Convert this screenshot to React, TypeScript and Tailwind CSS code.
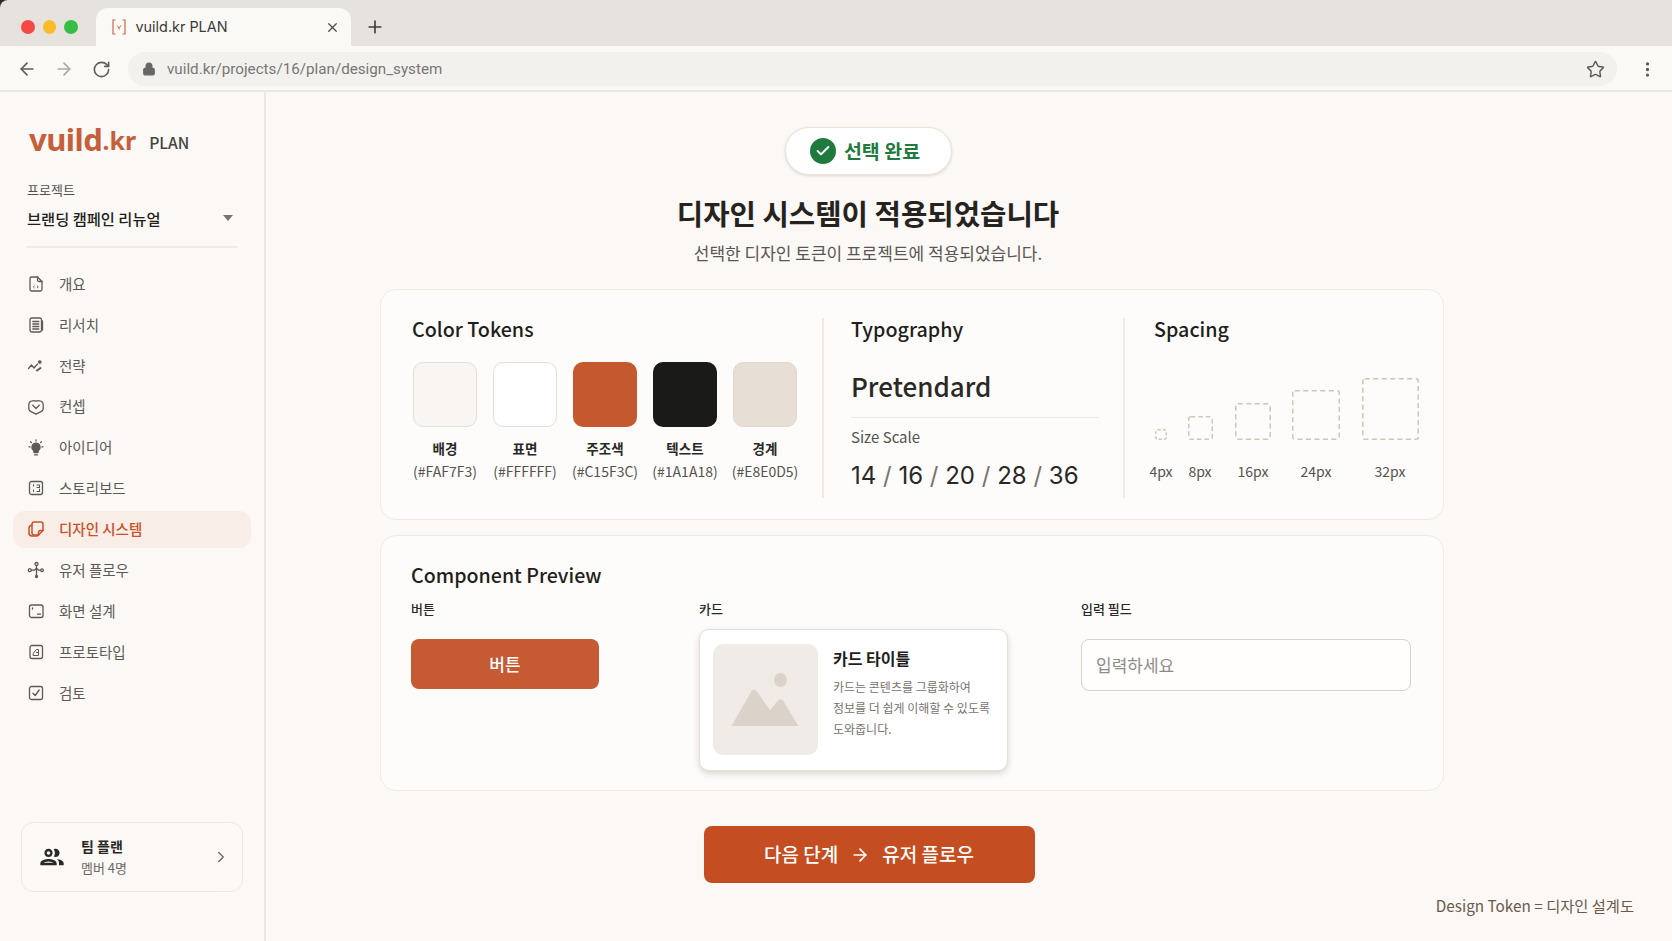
import React from "react";
import { ArrowLeft, ArrowRight, RotateCw, Lock, Star, X, Plus, EllipsisVertical, ChevronRight, Check } from "lucide-react";
import { MdOutlineGroup } from "react-icons/md";

type IconProps = { className?: string };
const Svg = ({ className, children }: IconProps & { children: React.ReactNode }) => (
  <svg viewBox="0 0 18 18" fill="none" stroke="currentColor" strokeWidth="1.3" strokeLinecap="round" strokeLinejoin="round" className={className ?? "h-[18px] w-[18px] shrink-0"}>
    {children}
  </svg>
);

const icons: Record<string, React.ReactNode> = {
  overview: (
    <Svg>
      <path d="M4.500 2h6l4.500 4.500v8A1.500 1.500 0 0 1 13.500 16h-9A1.500 1.500 0 0 1 3 14.500v-11A1.500 1.500 0 0 1 4.500 2z" />
      <path d="M10.500 2v3a1.500 1.500 0 0 0 1.500 1.500h3" />
      <path d="M7.300 11l-1 .9 1 .9M10.300 11l1 .9-1 .9" strokeWidth="0.9" />
    </Svg>
  ),
  research: (
    <Svg>
      <rect x="3" y="2" width="11.500" height="14" rx="1.800" />
      <path d="M5.800 5.500h6M5.800 8h6M5.800 10.500h6M5.800 13h6M15.500 5v9" />
    </Svg>
  ),
  strategy: (
    <Svg>
      <path d="M1.500 11.500l3-3.500 2.500 3 3.500-4" />
      <circle cx="12.800" cy="5" r="1.200" fill="currentColor" />
      <path d="M10 13.500l3.500-2.500" strokeWidth="2" />
    </Svg>
  ),
  concept: (
    <Svg>
      <path d="M9 16.200l-5-2.500a3.500 3.500 0 0 1-2.200-3.200V6.500A4 4 0 0 1 5.500 2.800C7 2.300 8 2.600 9 3.300c1-.7 2-1 3.500-.5a4 4 0 0 1 3.700 3.700v4a3.500 3.500 0 0 1-2.200 3.200z" />
      <path d="M5.800 7.300L9 10.500l3.200-3.200" />
    </Svg>
  ),
  idea: (
    <Svg>
      <path d="M9 4.200a4 4 0 0 0-2.400 7.200l.5 2.100h3.800l.5-2.100A4 4 0 0 0 9 4.200z" fill="currentColor" />
      <path d="M7.500 15.800h3M9 .9v1.100M2 7.800h1.200M14.800 7.800H16M3.600 2.800l.8.800M14.400 2.800l-.8.800" />
    </Svg>
  ),
  storyboard: (
    <Svg>
      <rect x="2.500" y="2.500" width="13" height="13" rx="2" />
      <path d="M6.500 5.500v1.500M6.500 11v1.500M10 6h2.500v2.500H10M10 12.500h2.500V10" strokeWidth="1.100" />
    </Svg>
  ),
  design: (
    <Svg>
      <path d="M5 3.800A2 2 0 0 1 7 2h7a2 2 0 0 1 2 2v6.500L11.500 15H7a2 2 0 0 1-2-2z" strokeWidth="1.500" />
      <path d="M5 5.300A3 3 0 0 0 2 8.300v4.700A3 3 0 0 0 5 16h4.500a3 3 0 0 0 2-1" strokeWidth="1.500" />
      <path d="M16 10.500h-2.500a2 2 0 0 0-2 2V15" strokeWidth="1.500" />
    </Svg>
  ),
  flow: (
    <Svg>
      <circle cx="9.500" cy="3" r="1.500" />
      <circle cx="2.800" cy="9.200" r="1.500" />
      <circle cx="15" cy="9.200" r="1.300" />
      <circle cx="9.500" cy="15.500" r="1" fill="currentColor" />
      <path d="M9.500 4.500v10M4.300 9.200h3l2.200-2 2.200 2h1.500" />
    </Svg>
  ),
  screen: (
    <Svg>
      <rect x="2.500" y="3" width="13.500" height="12.500" rx="2" />
      <path d="M5.500 6v1M10.500 12.200h3" />
    </Svg>
  ),
  prototype: (
    <Svg>
      <rect x="3" y="2.500" width="12.500" height="13" rx="2" />
      <path d="M6.500 12.500h5V6.500H9.500L6.500 10zM9.500 9.500h2" strokeWidth="1" />
    </Svg>
  ),
  review: (
    <Svg>
      <rect x="2.500" y="2.500" width="13" height="13" rx="2" />
      <path d="M6 9.200l2.200 2.300L12.200 6" />
    </Svg>
  ),
};

const nav = [
  ["개요", "overview"],
  ["리서치", "research"],
  ["전략", "strategy"],
  ["컨셉", "concept"],
  ["아이디어", "idea"],
  ["스토리보드", "storyboard"],
  ["디자인 시스템", "design"],
  ["유저 플로우", "flow"],
  ["화면 설계", "screen"],
  ["프로토타입", "prototype"],
  ["검토", "review"],
];

const swatches = [
  { name: "배경", hex: "#FAF7F3", cls: "bg-[#f8f5f2] border border-[#e4ded7]" },
  { name: "표면", hex: "#FFFFFF", cls: "bg-white border border-[#e4ded7]" },
  { name: "주조색", hex: "#C15F3C", cls: "bg-[#c4582f]" },
  { name: "텍스트", hex: "#1A1A18", cls: "bg-[#1a1a18]" },
  { name: "경계", hex: "#E8E0D5", cls: "bg-[#e7dfd6] border border-[#e0d8ce]" },
];

const spacings = [
  { label: "4px", w: 12, h: 11, dash: "3 2", col: "w-[26px]" },
  { label: "8px", w: 25, h: 24, dash: "4.500 3", col: "w-[52px]" },
  { label: "16px", w: 36, h: 37, dash: "5 3.500", col: "w-[54px]" },
  { label: "24px", w: 48, h: 50, dash: "5 3.500", col: "w-[72px]" },
  { label: "32px", w: 57, h: 62, dash: "5 3.500", col: "w-[76px]" },
];

function Chrome() {
  return (
    <header className="shrink-0">
      <div className="flex h-[46px] items-end rounded-tl-[8px] bg-[#e6e3df] pl-[21px]">
        <div className="flex h-full items-center gap-[8px] pt-[8px]">
          <span className="h-[13.500px] w-[13.500px] rounded-full bg-[#f44a45]" />
          <span className="h-[13.500px] w-[13.500px] rounded-full bg-[#fbbc2c]" />
          <span className="h-[13.500px] w-[13.500px] rounded-full bg-[#37bf45]" />
        </div>
        <div className="ml-[18px] flex h-[38px] w-[255px] items-center rounded-t-[12px] bg-[#fbf9f6] pl-[16px] pr-[11px]">
          <svg viewBox="0 0 14 16" fill="none" stroke="#c8684a" strokeWidth="1.200" className="h-[16px] w-[14px] shrink-0">
            <path d="M3.500 1H1v14h2.500M10.500 1H13v14h-2.500" />
            <path d="M5 6.500L7 9l2-2.500M7 9v1.500" strokeWidth="1" />
          </svg>
          <span className="ml-[10px] flex-1 font-['Inter',sans-serif] text-[14.400px] leading-none text-[#3a3a38]">vuild.kr PLAN</span>
          <X className="h-[15px] w-[15px] text-[#4a4a48]" strokeWidth={2} />
        </div>
        <div className="ml-[14px] flex h-[38px] items-center">
          <Plus className="h-[20px] w-[20px] text-[#3f3f3d]" strokeWidth={2} />
        </div>
      </div>
      <div className="flex h-[46px] items-center border-b-2 border-[#ece8e3] bg-[#fbf9f6] pl-[17px] pt-[2px]">
        <ArrowLeft className="h-[20px] w-[20px] text-[#5c5c5a]" strokeWidth={2} />
        <ArrowRight className="ml-[17px] h-[20px] w-[20px] text-[#a9a9a6]" strokeWidth={2} />
        <RotateCw className="ml-[18px] h-[19px] w-[19px] text-[#5c5c5a]" strokeWidth={2} />
        <div className="ml-[17px] flex h-[34px] w-[1489px] items-center rounded-full bg-[#f3f1ee] pl-[14px] pr-[12px]">
          <Lock className="h-[14px] w-[14px] fill-[#666664] text-[#666664]" strokeWidth={2} />
          <span className="ml-[11px] flex-1 pt-[2px] font-['Roboto',sans-serif] text-[15.200px] leading-none text-[#777775]">vuild.kr/projects/16/plan/design_system</span>
          <Star className="h-[19px] w-[19px] text-[#5c5c5a]" strokeWidth={1.800} />
        </div>
        <EllipsisVertical className="ml-[21px] h-[19px] w-[19px] text-[#5c5c5a]" strokeWidth={2.200} />
      </div>
    </header>
  );
}

function Sidebar() {
  return (
    <aside className="flex w-[266px] shrink-0 flex-col border-r-2 border-[#ebe7e2] bg-[#fbf8f5]">
      <div className="flex h-[65px] items-end pl-[29px] pt-[34px]">
        <span className="font-['Noto_Sans',sans-serif] text-[31px] font-bold leading-[36px] tracking-[-0.500px] text-[#c55f3b]">vuild</span>
        <span className="font-['Noto_Sans',sans-serif] text-[25px] font-bold leading-[34px] text-[#c55f3b]">.kr</span>
        <span className="ml-[13px] text-[15.700px] font-medium leading-[29px] text-[#444442]">PLAN</span>
      </div>
      <div className="mt-[23.500px] px-[27px] text-[13px] leading-[18px] text-[#55524e]">프로젝트</div>
      <div className="mt-[7px] flex items-center justify-between pl-[27px] pr-[31px]">
        <span className="text-[15.300px] font-medium leading-[24px] text-[#1f1e1c]">브랜딩 캠페인 리뉴얼</span>
        <span className="h-0 w-0 border-x-[5px] border-t-[6px] border-x-transparent border-t-[#77736e]" />
      </div>
      <div className="mx-[26px] mt-[16px] h-[2px] bg-[#efeae4]" />
      <nav className="mt-[18px] flex flex-col gap-[3.900px] px-[13px]">
        {nav.map(([label, key]) => {
          const active = key === "design";
          return (
            <div
              key={key}
              className={
                active
                  ? "flex h-[37px] items-center gap-[14px] rounded-[12px] bg-[#f8eee7] px-[14px] text-[#c9502a]"
                  : "flex h-[37px] items-center gap-[14px] px-[14px] text-[#5d5a56]"
              }
            >
              {icons[key]}
              <span className={active ? "text-[14.500px] font-medium leading-none" : "text-[14.500px] leading-none"}>{label}</span>
            </div>
          );
        })}
      </nav>
      <div className="mx-[21px] mb-[49px] mt-auto flex h-[70px] items-center rounded-[12px] border border-[#efe8e0] pl-[16px] pr-[12px]">
        <MdOutlineGroup className="h-[28px] w-[28px] shrink-0 text-[#2a2826]" />
        <div className="ml-[15px] flex-1">
          <div className="text-[14px] font-bold leading-[20px] text-[#2a2826]">팀 플랜</div>
          <div className="mt-[2px] text-[13px] leading-[20px] text-[#6c6965]">멤버 4명</div>
        </div>
        <ChevronRight className="h-[18px] w-[18px] text-[#6c6965]" strokeWidth={1.800} />
      </div>
    </aside>
  );
}

function TokensCard() {
  return (
    <section className="flex h-[231px] w-[1064px] rounded-[16px] border border-[#f0eae3] bg-[#fdfcfa] pb-[21px] pt-[28px]">
      <div className="w-[440.500px] pl-[32px]">
        <h2 className="-ml-px text-[19.700px] font-medium leading-[22px] text-[#1f1e1c]">Color Tokens</h2>
        <div className="mt-[22px] flex gap-[16px]">
          {swatches.map((s) => (
            <div key={s.name} className="flex w-[64px] flex-col items-center">
              <div className={`h-[65px] w-[64px] rounded-[10px] ${s.cls}`} />
              <div className="mt-[11px] text-[13.500px] font-bold leading-[20px] text-[#2a2826]">{s.name}</div>
              <div className="mt-[3px] whitespace-nowrap text-[14px] leading-[20px] text-[#55524e]">({s.hex})</div>
            </div>
          ))}
        </div>
      </div>
      <div className="w-[301px] border-l-2 border-[#f0eae3] pl-[27.500px]">
        <h2 className="text-[19.700px] font-medium leading-[22px] text-[#1f1e1c]">Typography</h2>
        <div className="mt-[28px] text-[26px] font-medium leading-[36px] text-[#2a2826]">Pretendard</div>
        <div className="mt-[13px] h-px w-[248px] bg-[#efeae4]" />
        <div className="mt-[9px] text-[15px] leading-[20px] text-[#55524e]">Size Scale</div>
        <div className="mt-[12px] font-['Inter',sans-serif] text-[24px] leading-[34px] text-[#2a2826]">
          14 <span className="text-[#77736e]">/</span> 16 <span className="text-[#77736e]">/</span> 20 <span className="text-[#77736e]">/</span> 28 <span className="text-[#77736e]">/</span> 36
        </div>
      </div>
      <div className="flex-1 border-l-2 border-[#f0eae3] pl-[29.500px]">
        <h2 className="text-[19.700px] font-medium leading-[22px] text-[#1f1e1c]">Spacing</h2>
        <div className="ml-[-6px] flex">
          {spacings.map((s) => (
            <div key={s.label} className={`flex shrink-0 flex-col items-center ${s.col}`}>
              <div className="flex h-[100px] items-end">
                <svg width={s.w} height={s.h} viewBox={`0 0 ${s.w} ${s.h}`} fill="none">
                  <rect x="0.750" y="0.750" width={s.w - 1.500} height={s.h - 1.500} rx="2" stroke="#d3c4b4" strokeWidth="1.500" strokeDasharray={s.dash} />
                </svg>
              </div>
              <div className="mt-[21px] whitespace-nowrap text-[14px] leading-[20px] text-[#55524e]">{s.label}</div>
            </div>
          ))}
        </div>
      </div>
    </section>
  );
}

function PreviewCard() {
  return (
    <section className="mt-[15px] h-[256px] w-[1064px] rounded-[16px] border border-[#f0eae3] bg-[#fdfcfa] pl-[30px] pt-[27px]">
      <h2 className="text-[19.600px] font-medium leading-[24px] text-[#1f1e1c]">Component Preview</h2>
      <div className="mt-[13px] flex">
        <div className="w-[288px]">
          <div className="text-[13px] font-medium leading-[18px] text-[#2a2826]">버튼</div>
          <button className="mt-[21px] h-[50px] w-[188px] rounded-[8px] bg-[#c55a33] text-[17px] font-medium text-white">버튼</button>
        </div>
        <div className="w-[382px]">
          <div className="text-[13px] font-medium leading-[18px] text-[#2a2826]">카드</div>
          <div className="mt-[11px] flex h-[142px] w-[309px] gap-[15px] rounded-[10px] border border-[#e4ded7] bg-white py-[14px] pl-[13px] shadow-[0_3px_6px_rgba(90,70,50,0.2)]">
            <div className="h-[111px] w-[105px] shrink-0 rounded-[10px] bg-[#f0ebe6]">
              <svg viewBox="0 0 105 111" className="h-full w-full" fill="#dbd3ca">
                <ellipse cx="67.500" cy="36" rx="6.500" ry="7" />
                <path d="M18.500 82L38.500 47q2.500-3 5 0L57 66l8-9.500q2.500-2.500 5 0L85.500 82z" />
              </svg>
            </div>
            <div className="pt-[3px]">
              <div className="text-[16px] font-bold leading-[22px] text-[#1f1e1c]">카드 타이틀</div>
              <p className="mt-[7px] text-[12px] leading-[21px] text-[#77736e]">
                카드는 콘텐츠를 그룹화하여
                <br />
                정보를 더 쉽게 이해할 수 있도록
                <br />
                도와줍니다.
              </p>
            </div>
          </div>
        </div>
        <div className="w-[330px]">
          <div className="text-[13px] font-medium leading-[18px] text-[#2a2826]">입력 필드</div>
          <div className="mt-[21px] flex h-[52px] items-center rounded-[8px] border-[1.500px] border-[#d8d2cb] bg-[#fffefd] pb-[1px] pl-[14px] text-[17px] text-[#8f8c88]">입력하세요</div>
        </div>
      </div>
    </section>
  );
}

export default function App() {
  return (
    <div className="flex h-[941px] w-full flex-col overflow-hidden bg-[#2a2a2a] font-['Noto_Sans_CJK_KR','Noto_Sans',sans-serif]">
      <Chrome />
      <div className="flex flex-1">
        <Sidebar />
        <main className="flex flex-1 flex-col bg-[#fbf8f5] pl-[114px] pt-[35px]">
          <div className="flex w-[976px] flex-col items-center">
            <div className="flex h-[48px] w-[167px] items-center justify-center gap-[8px] rounded-full border border-[#ece4db] bg-white pr-[6px] shadow-[0_1px_3px_rgba(90,70,50,0.18)]">
              <span className="flex h-[26px] w-[26px] items-center justify-center rounded-full bg-[#1f7a3d]">
                <Check className="h-[16px] w-[16px] text-white" strokeWidth={3} />
              </span>
              <span className="text-[19.500px] font-bold leading-none text-[#1f7a3d]">선택 완료</span>
            </div>
            <h1 className="mt-[18px] text-[28.700px] font-bold leading-[40px] text-[#26231f]">디자인 시스템이 적용되었습니다</h1>
            <p className="mt-[8px] text-[17px] leading-[24px] text-[#5a5753]">선택한 디자인 토큰이 프로젝트에 적용되었습니다.</p>
          </div>
          <div className="mt-[24px]">
            <TokensCard />
            <PreviewCard />
          </div>
          <div className="flex w-[978px] justify-center">
            <button className="mt-[35px] flex h-[57px] w-[331px] items-center justify-center gap-[12px] rounded-[8px] bg-[#c44d22] text-[19px] font-medium text-white">
              <span>다음 단계</span>
              <ArrowRight className="h-[20px] w-[20px]" strokeWidth={2} />
              <span>유저 플로우</span>
            </button>
          </div>
          <div className="mt-[10px] flex justify-end pr-[38px] text-[15.300px] leading-[24px] text-[#6b5a4c]">Design Token = 디자인 설계도</div>
        </main>
      </div>
    </div>
  );
}
